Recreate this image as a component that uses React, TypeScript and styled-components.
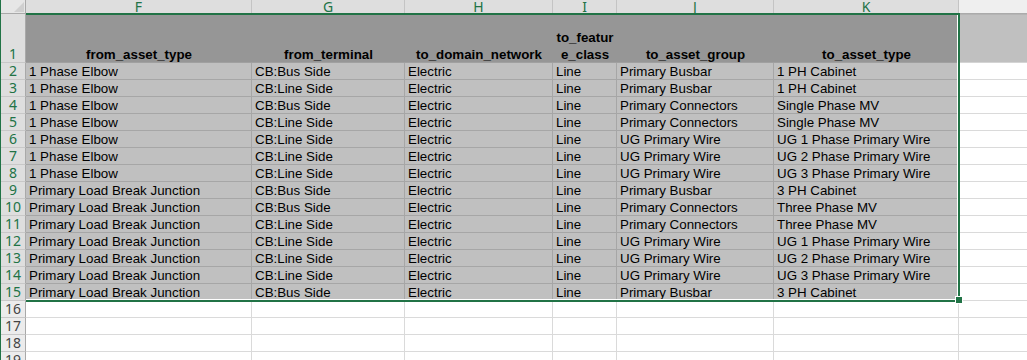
import React from "react";
import styled, { createGlobalStyle, css } from "styled-components";

const GREEN = "#217346";

const GlobalStyle = createGlobalStyle`
  html, body { margin: 0; padding: 0; background: #ffffff; overflow: hidden; }
  #root { width: 1027px; height: 360px; }
`;

const Sheet = styled.div`
  position: relative;
  display: grid;
  grid-template-columns: 25px 226px 153px 148px 64px 157px 185px 1fr;
  grid-template-rows: 14px 49px repeat(17, 17px);
  width: 1027px;
  height: 360px;
  box-sizing: border-box;
  border-left: 1px solid ${GREEN};
  overflow: hidden;
  background: #ffffff;
  font-family: "Liberation Sans", Arial, sans-serif;
`;

const Corner = styled.div`
  position: relative;
  box-sizing: border-box;
  background: #e6e6e6;
  border-right: 1px solid #a9a9a9;
  border-bottom: 1px solid #a9a9a9;
  svg { position: absolute; right: 1px; bottom: 1px; }
`;

const ColHeader = styled.div<{ $selected?: boolean }>`
  box-sizing: border-box;
  display: flex;
  align-items: center;
  justify-content: center;
  font-family: "Noto Sans", "Open Sans", sans-serif;
  font-size: 14px;
  line-height: 13px;
  border-right: 1px solid #c4c4c4;
  border-bottom: 1px solid #ababab;
  ${(p) =>
    p.$selected
      ? css`
          background: #dedede;
          color: ${GREEN};
        `
      : css`
          background: #efefef;
          color: #444444;
          border-right: none;
        `}
`;

const RowHeader = styled.div<{ $selected?: boolean }>`
  box-sizing: border-box;
  display: flex;
  align-items: flex-end;
  justify-content: center;
  font-family: "Noto Sans", "Open Sans", sans-serif;
  font-size: 14px;
  line-height: 16px;
  border-right: 1px solid #a9a9a9;
  border-bottom: 1px solid #c8c8c8;
  ${(p) =>
    p.$selected
      ? css`
          background: #dedede;
          color: ${GREEN};
        `
      : css`
          background: #ececec;
          color: #444444;
        `}
`;

const TitleCell = styled.div`
  box-sizing: border-box;
  display: flex;
  align-items: flex-end;
  justify-content: center;
  text-align: center;
  background: #969696;
  border-bottom: 1px solid #a0a0a0;
  color: #000000;
  font-weight: bold;
  font-size: 13.33px;
  line-height: 17px;
  white-space: nowrap;
  overflow: hidden;
`;

const TitleText = styled.span`
  margin-bottom: -1px;
`;

const TitleFiller = styled.div`
  box-sizing: border-box;
  background: #c0c0c0;
  border-top: 1px solid #b4b4b4;
  border-bottom: 1px solid #d4d4d4;
`;

const DataCell = styled.div`
  box-sizing: border-box;
  background: #c0c0c0;
  border-right: 1px solid #a6a6a6;
  border-bottom: 1px solid #a6a6a6;
  padding-left: 3px;
  padding-top: 1px;
  color: #000000;
  font-size: 13.33px;
  line-height: 15px;
  white-space: nowrap;
  overflow: hidden;
`;

const EmptyCell = styled.div<{ $last?: boolean }>`
  box-sizing: border-box;
  background: #ffffff;
  border-bottom: 1px solid #dadada;
  border-right: ${(p) => (p.$last ? "none" : "1px solid #dadada")};
`;

const Selection = styled.div`
  position: absolute;
  left: 25px;
  top: 13px;
  width: 934px;
  height: 289px;
  box-sizing: border-box;
  border-top: 2px solid ${GREEN};
  border-right: 2px solid ${GREEN};
  border-bottom: 2px solid ${GREEN};
  pointer-events: none;
  &::after {
    content: "";
    position: absolute;
    left: 0;
    top: 0;
    right: 0;
    bottom: 0;
    border-right: 1px solid #ffffff;
    border-bottom: 1px solid #ffffff;
  }
`;

const FillHandle = styled.div`
  position: absolute;
  left: 954px;
  top: 296px;
  width: 8px;
  height: 8px;
  box-sizing: border-box;
  background: ${GREEN};
  border: 1px solid #ffffff;
`;

const columns = ["F", "G", "H", "I", "J", "K"];

const titles: React.ReactNode[] = [
  "from_asset_type",
  "from_terminal",
  "to_domain_network",
  <>
    to_featur
    <br />
    e_class
  </>,
  "to_asset_group",
  "to_asset_type",
];

const PLBJ = "Primary Load Break Junction";

const rows: string[][] = [
  ["1 Phase Elbow", "CB:Bus Side", "Electric", "Line", "Primary Busbar", "1 PH Cabinet"],
  ["1 Phase Elbow", "CB:Line Side", "Electric", "Line", "Primary Busbar", "1 PH Cabinet"],
  ["1 Phase Elbow", "CB:Bus Side", "Electric", "Line", "Primary Connectors", "Single Phase MV"],
  ["1 Phase Elbow", "CB:Line Side", "Electric", "Line", "Primary Connectors", "Single Phase MV"],
  ["1 Phase Elbow", "CB:Line Side", "Electric", "Line", "UG Primary Wire", "UG 1 Phase Primary Wire"],
  ["1 Phase Elbow", "CB:Line Side", "Electric", "Line", "UG Primary Wire", "UG 2 Phase Primary Wire"],
  ["1 Phase Elbow", "CB:Line Side", "Electric", "Line", "UG Primary Wire", "UG 3 Phase Primary Wire"],
  [PLBJ, "CB:Bus Side", "Electric", "Line", "Primary Busbar", "3 PH Cabinet"],
  [PLBJ, "CB:Bus Side", "Electric", "Line", "Primary Connectors", "Three Phase MV"],
  [PLBJ, "CB:Line Side", "Electric", "Line", "Primary Connectors", "Three Phase MV"],
  [PLBJ, "CB:Line Side", "Electric", "Line", "UG Primary Wire", "UG 1 Phase Primary Wire"],
  [PLBJ, "CB:Line Side", "Electric", "Line", "UG Primary Wire", "UG 2 Phase Primary Wire"],
  [PLBJ, "CB:Line Side", "Electric", "Line", "UG Primary Wire", "UG 3 Phase Primary Wire"],
  [PLBJ, "CB:Bus Side", "Electric", "Line", "Primary Busbar", "3 PH Cabinet"],
];

const emptyRows = [16, 17, 18, 19];

export default function App() {
  return (
    <>
      <GlobalStyle />
      <Sheet>
        <Corner>
          <svg width="10" height="10" viewBox="0 0 10 10">
            <polygon points="10,0 10,10 0,10" fill="#cfcfcf" />
          </svg>
        </Corner>
        {columns.map((c) => (
          <ColHeader key={c} $selected>
            {c}
          </ColHeader>
        ))}
        <ColHeader />

        <RowHeader $selected>1</RowHeader>
        {titles.map((t, i) => (
          <TitleCell key={i}>
            <TitleText>{t}</TitleText>
          </TitleCell>
        ))}
        <TitleFiller />

        {rows.map((r, ri) => (
          <React.Fragment key={ri}>
            <RowHeader $selected>{ri + 2}</RowHeader>
            {r.map((v, ci) => (
              <DataCell key={ci}>{v}</DataCell>
            ))}
            <EmptyCell $last />
          </React.Fragment>
        ))}

        {emptyRows.map((n) => (
          <React.Fragment key={n}>
            <RowHeader>{n}</RowHeader>
            {columns.map((c) => (
              <EmptyCell key={c} />
            ))}
            <EmptyCell $last />
          </React.Fragment>
        ))}

        <Selection />
        <FillHandle />
      </Sheet>
    </>
  );
}
